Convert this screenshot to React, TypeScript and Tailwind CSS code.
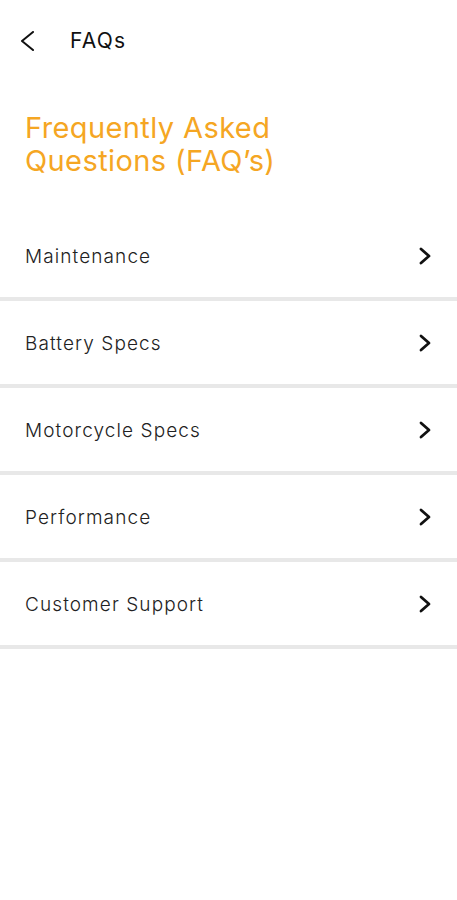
import React from 'react';

const items = ['Maintenance', 'Battery Specs', 'Motorcycle Specs', 'Performance', 'Customer Support'];

const BackIcon = () => (
  <svg viewBox="0 0 16 20" width="16" height="20" fill="none" stroke="currentColor" strokeWidth="2" strokeLinecap="round" strokeLinejoin="round" className="text-[#111]">
    <path d="M14 1 L3 10 L14 19" />
  </svg>
);

const NextIcon = () => (
  <svg viewBox="0 0 14 18" width="14" height="18" fill="none" stroke="currentColor" strokeWidth="2.8" strokeLinecap="round" strokeLinejoin="round" className="text-[#111]">
    <path d="M3 2 L11 9 L3 16" />
  </svg>
);

export default function App() {
  return (
    <div className="min-h-[900px] bg-white text-[#222]" style={{ fontFamily: 'Inter, "Noto Sans", sans-serif' }}>
      <header className="flex items-center h-[82px] pl-[19px]">
        <BackIcon />
        <h1 className="ml-[35px] text-[21px] tracking-[1.2px] text-[#111]">FAQs</h1>
      </header>

      <h2 className="px-[25px] pt-[29px] pb-[37px] text-[29px] leading-[33px] tracking-[0.4px] text-[#f5a623]">
        Frequently Asked<br />Questions (FAQ’s)
      </h2>

      <ul>
        {items.map((item) => (
          <li key={item} className="flex items-center justify-between h-[87px] pl-[25px] pr-[25px] border-b-4 border-[#e8e8e8]">
            <span className="pt-[4px] text-[19px] font-light tracking-[1.1px] text-[#222]">{item}</span>
            <NextIcon />
          </li>
        ))}
      </ul>
    </div>
  );
}
